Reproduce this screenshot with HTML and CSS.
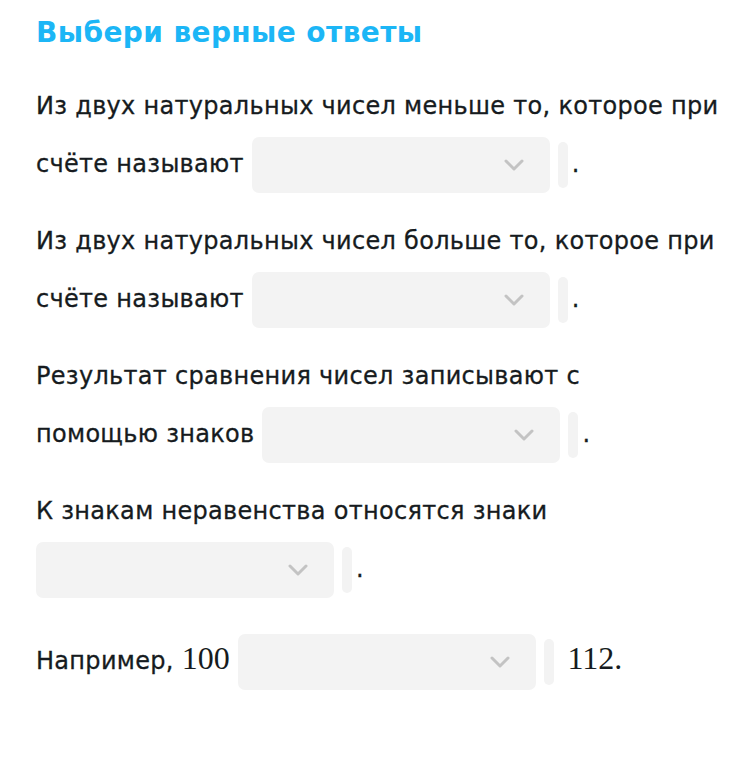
FILE: index.html
```html
<!DOCTYPE html>
<html lang="ru">
<head>
<meta charset="utf-8">
<link rel="stylesheet" href="styles.css">
</head>
<body>
<div class="task">
  <h1 class="title">Выбери верные ответы</h1>
  <p class="para">Из двух натуральных чисел меньше то, которое при <span class="nowrap">счёте называют</span> <span class="sel"><svg class="chev" viewBox="0 0 20 12"><path d="M2 2l8 8 8-8"/></svg></span><span class="bar"></span><span class="dot">.</span></p>
  <p class="para">Из двух натуральных чисел больше то, которое при <span class="nowrap">счёте называют</span> <span class="sel"><svg class="chev" viewBox="0 0 20 12"><path d="M2 2l8 8 8-8"/></svg></span><span class="bar"></span><span class="dot">.</span></p>
  <p class="para">Результат сравнения чисел записывают с <span class="nowrap">помощью знаков</span> <span class="sel"><svg class="chev" viewBox="0 0 20 12"><path d="M2 2l8 8 8-8"/></svg></span><span class="bar"></span><span class="dot">.</span></p>
  <p class="para">К знакам неравенства относятся знаки <span class="sel"><svg class="chev" viewBox="0 0 20 12"><path d="M2 2l8 8 8-8"/></svg></span><span class="bar"></span><span class="dot">.</span></p>
  <p class="para last">Например, <span class="math">100</span> <span class="sel"><svg class="chev" viewBox="0 0 20 12"><path d="M2 2l8 8 8-8"/></svg></span><span class="bar"></span> <span class="math after">112.</span></p>
</div>
</body>
</html>
```
FILE: styles.css
```css
html, body { margin: 0; padding: 0; background: #fff; }
.task {
  padding: 0 20px 0 36px;
  font-family: "DejaVu Sans", sans-serif;
  color: #161b20;
}
.title {
  margin: 15px 0 0;
  font-size: 28px;
  line-height: 36px;
  font-weight: 700;
  color: #1cb6f6;
  letter-spacing: 0.4px;
}
.para {
  margin: 26px 0 0;
  font-size: 24px;
  line-height: 58px;
  letter-spacing: 0.3px;
  -webkit-text-stroke: 0.3px #161b20;
}
.para + .para { margin-top: 19px; }
.para.last { margin-top: 31px; }
.nowrap { white-space: nowrap; }
.sel {
  display: inline-flex;
  align-items: center;
  justify-content: flex-end;
  width: 298px;
  height: 56px;
  box-sizing: border-box;
  padding-right: 26px;
  background: #f3f3f3;
  border-radius: 7px;
  vertical-align: middle;
}
.chev {
  width: 20px;
  height: 12px;
  fill: none;
  stroke: #c3c3c3;
  stroke-width: 3;
  stroke-linecap: round;
  stroke-linejoin: round;
}
.bar {
  display: inline-block;
  width: 10px;
  height: 46px;
  margin-left: 8px;
  background: #f3f3f3;
  border-radius: 5px;
  vertical-align: middle;
}
.dot { margin-left: 4px; }
.math {
  font-family: "Liberation Serif", serif;
  font-size: 32px;
  letter-spacing: 0;
  -webkit-text-stroke: 0;
}
.math.after { margin-left: 6px; }
```
